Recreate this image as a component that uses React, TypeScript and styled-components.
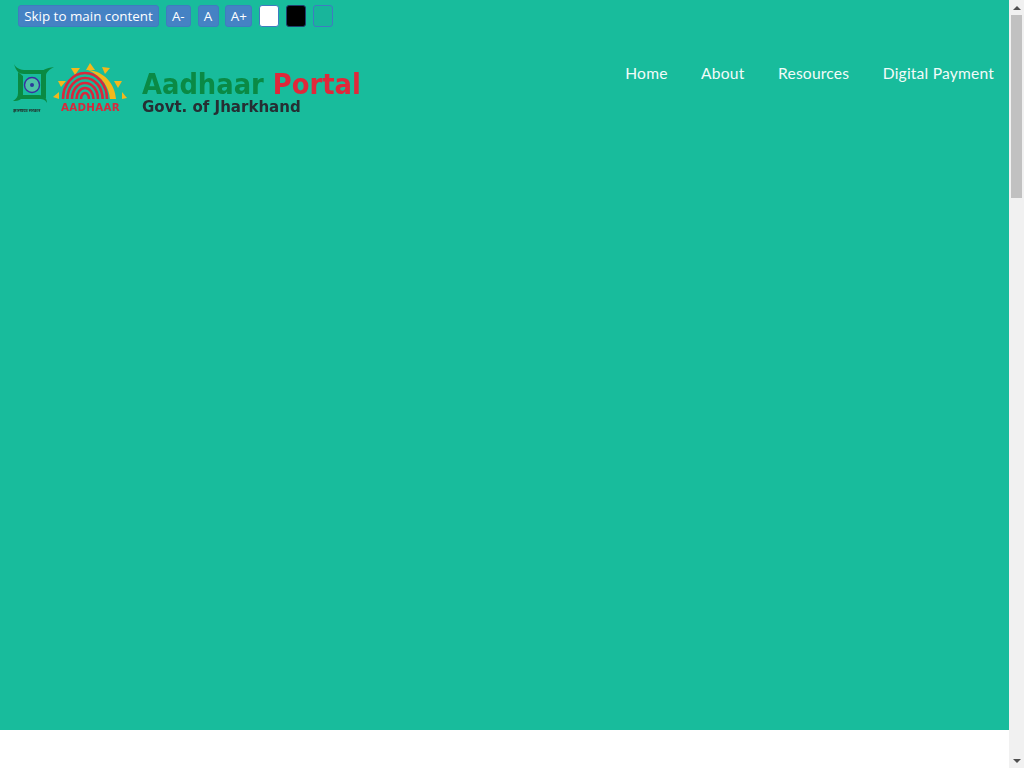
import styled, { createGlobalStyle } from "styled-components";

const GlobalStyle = createGlobalStyle`
  html, body {
    height: 100%;
    overflow: hidden;
  }
  body {
    margin: 0;
    background: #fff;
    font-family: "Lato", "Open Sans", sans-serif;
  }
`;

const Page = styled.div`
  display: flex;
  height: 768px;
  overflow: hidden;
`;

const Main = styled.main`
  flex: 1;
  min-width: 0;
`;

const Hero = styled.section`
  height: 730px;
  background: #18bc9c;
`;

const Toolbar = styled.div`
  display: flex;
  align-items: center;
  gap: 6.8px;
  padding: 5px 0 0 18px;
`;

const ToolButton = styled.button<{ $swatch?: string; $width?: number }>`
  box-sizing: border-box;
  width: ${(p) => (p.$swatch ? "20px" : p.$width ? `${p.$width}px` : "auto")};
  height: 22px;
  margin: 0;
  padding: 0 0 1px;
  border: 1px solid ${(p) => (p.$swatch === "#000" ? "#1f3f6e" : "#3f7cc0")};
  border-radius: 3px;
  background: ${(p) => p.$swatch ?? "#4582c4"};
  color: #fff;
  font-family: "Open Sans", sans-serif;
  font-size: 13.4px;
  line-height: 20px;
  white-space: nowrap;
`;

const Header = styled.header`
  display: flex;
  justify-content: space-between;
  align-items: flex-start;
  padding: 35px 15px 0 10px;
`;

const Brand = styled.div`
  display: flex;
  align-items: flex-start;
  gap: 14px;
`;

const LogoArt = styled.svg`
  display: block;
  filter: blur(0.35px);
`;

const BrandText = styled.div`
  display: flex;
  flex-direction: column;
  padding-top: 8px;
  font-family: "DejaVu Sans Condensed", "DejaVu Sans", sans-serif;
  font-stretch: condensed;
  font-weight: 700;
  white-space: nowrap;
  filter: blur(0.25px);
`;

const BrandTitle = styled.div`
  color: #0a8a45;
  font-size: 28.7px;
  line-height: 28px;
  span {
    color: #e0283a;
  }
`;

const BrandSub = styled.div`
  color: #262e33;
  font-size: 16.7px;
  line-height: 16px;
`;

const Nav = styled.nav`
  display: flex;
  gap: 33.5px;
`;

const NavLink = styled.a`
  color: #f2fbf9;
  font-family: "Lato", sans-serif;
  font-size: 15.6px;
  letter-spacing: 0.2px;
  line-height: 22px;
`;

const Scrollbar = styled.aside`
  display: flex;
  flex-direction: column;
  flex: 0 0 15px;
  background: #f1f1f1;
`;

const ScrollArrow = styled.div<{ $down?: boolean }>`
  display: flex;
  flex: 0 0 15px;
  align-items: center;
  justify-content: center;
  &::before {
    content: "";
    border-left: 4px solid transparent;
    border-right: 4px solid transparent;
    ${(p) =>
      p.$down ? "border-top: 4px solid #505050;" : "border-bottom: 4px solid #505050;"}
  }
`;

const ScrollTrack = styled.div`
  flex: 1;
  padding: 0 2px;
`;

const ScrollThumb = styled.div`
  height: 183px;
  background: #c1c1c1;
`;

const Logos = () => (
  <LogoArt width="118" height="53" viewBox="0 0 118 53">
    {/* state emblem */}
    <g fill="#0a8a42">
      <path d="M4 2C6 6 10 8 16 8L34 8L34 12L14 12C9 12 6 9 4 2Z" />
      <path d="M44 5C39 8 36 10 36 14L36 36L31 36L31 13C31 8 36 6 44 5Z" />
      <path d="M37 41C35 37 32 37 28 37L9 37L9 33L29 33C34 33 37 36 37 41Z" />
      <path d="M3 39C6 37 8 35 8 31L8 10L13 14L13 33C13 37 9 39 3 39Z" />
    </g>
    <circle cx="22" cy="23" r="7.5" fill="#4fc2a6" stroke="#3a2fa0" strokeWidth="1.4" />
    <circle cx="22" cy="23" r="2" fill="#2a3a9a" />
    <text x="3" y="50" fontSize="4.2" fontWeight="700" fill="#23302c" fontFamily="Noto Sans, sans-serif">
      झारखण्ड सरकार
    </text>
    {/* aadhaar sun and fingerprint */}
    <g fill="#f4b81c">
      <path d="M80 1L85 8H76Z" />
      <path d="M61 6L70 6L65 13Z" />
      <path d="M92 5L100 6L95 12Z" />
      <path d="M48 19L56 19L51 25Z" />
      <path d="M104 19L112 19L108 26Z" />
      <path d="M43 35L49 30L49 37Z" />
      <path d="M117 36L112 30L112 37Z" />
      <path d="M78 8C94 9 105 22 106 37L100 37C99 25 92 14 78 8Z" />
    </g>
    <g fill="none" stroke="#d8283c" strokeWidth="2.6">
      <path d="M53 37A22 26 0 0 1 97 37" />
      <path d="M57.400 37A17.600 21 0 0 1 92.600 37" />
      <path d="M62 37A13 16 0 0 1 88 37" />
      <path d="M66.500 37A8.500 11 0 0 1 83.500 37" />
      <path d="M71 37A4 6 0 0 1 79 37" />
    </g>
    <text
      x="80.500"
      y="48.500"
      textAnchor="middle"
      fontSize="10.3"
      fontWeight="700"
      letterSpacing="0.3"
      fill="#d8283c"
      fontFamily="DejaVu Sans, sans-serif"
    >
      AADHAAR
    </text>
  </LogoArt>
);

export default function App() {
  return (
    <Page>
      <GlobalStyle />
      <Main>
        <Hero>
          <Toolbar>
            <ToolButton $width={141}>Skip to main content</ToolButton>
            <ToolButton $width={25}>A-</ToolButton>
            <ToolButton $width={21}>A</ToolButton>
            <ToolButton $width={27}>A+</ToolButton>
            <ToolButton $swatch="#fff" />
            <ToolButton $swatch="#000" />
            <ToolButton $swatch="#18b59b" />
          </Toolbar>
          <Header>
            <Brand>
              <Logos />
              <BrandText>
                <BrandTitle>
                  Aadhaar <span>Portal</span>
                </BrandTitle>
                <BrandSub>Govt. of Jharkhand</BrandSub>
              </BrandText>
            </Brand>
            <Nav>
              <NavLink>Home</NavLink>
              <NavLink>About</NavLink>
              <NavLink>Resources</NavLink>
              <NavLink>Digital Payment</NavLink>
            </Nav>
          </Header>
        </Hero>
      </Main>
      <Scrollbar>
        <ScrollArrow />
        <ScrollTrack>
          <ScrollThumb />
        </ScrollTrack>
        <ScrollArrow $down />
      </Scrollbar>
    </Page>
  );
}
